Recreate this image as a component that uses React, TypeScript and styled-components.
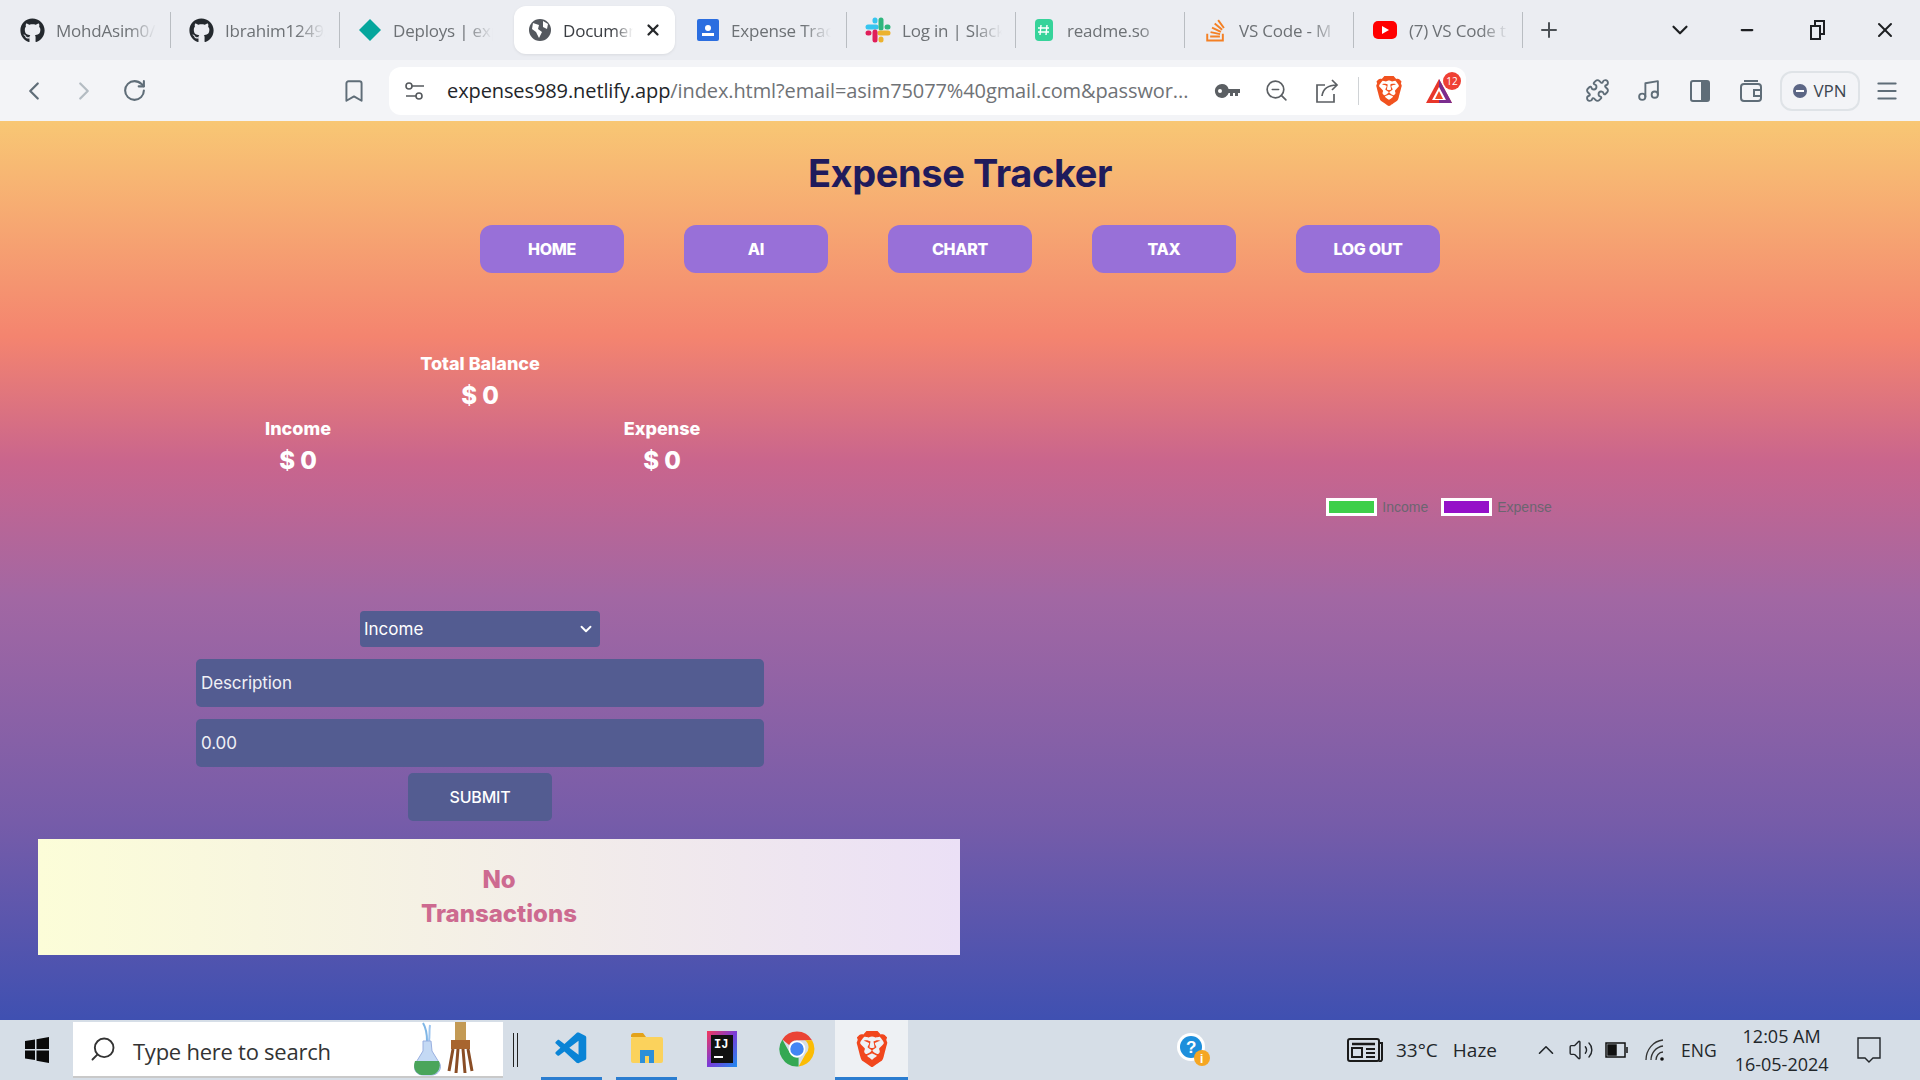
import React from "react";
import styled, { createGlobalStyle } from "styled-components";
import { FaGithub, FaStackOverflow } from "react-icons/fa";
import { SiBrave } from "react-icons/si";
import { VscVscode } from "react-icons/vsc";
import {
  ChevronDown,
  ChevronLeft,
  ChevronRight,
  ChevronUp,
  Bookmark,
  RotateCw,
  ZoomOut,
  Puzzle,
  Music,
  Menu,
  Plus,
  Minus,
  X,
  Search,
  Volume2,
} from "lucide-react";

const GlobalStyle = createGlobalStyle`
  html, body { margin: 0; padding: 0; height: 100%; overflow: hidden; }
  * { box-sizing: border-box; }
`;

const chromeFont = `"Open Sans", "Noto Sans", sans-serif`;
const pageFont = `Inter, "Open Sans", sans-serif`;

const Shell = styled.div`
  width: 1920px;
  height: 1080px;
  display: flex;
  flex-direction: column;
  font-family: ${chromeFont};
`;

const TabBar = styled.div`
  height: 60px;
  background: #ebedf2;
  display: flex;
  align-items: center;
  padding-left: 2px;
`;

const Tab = styled.div<{ $active?: boolean; $noSep?: boolean }>`
  width: ${(p) => (p.$active ? "161px" : "169px")};
  height: ${(p) => (p.$active ? "48px" : "36px")};
  margin: ${(p) => (p.$active ? "0 3px 0 5px" : "0")};
  padding-left: ${(p) => (p.$active ? "14px" : "18px")};
  display: flex;
  align-items: center;
  gap: 11px;
  flex: none;
  background: ${(p) => (p.$active ? "#fff" : "transparent")};
  border-radius: ${(p) => (p.$active ? "12px" : "0")};
  border-right: ${(p) => (p.$active || p.$noSep ? "none" : "1px solid #b9bdc2")};
  color: ${(p) => (p.$active ? "#3a3d42" : "#6d7175")};
  box-shadow: ${(p) => (p.$active ? "0 1px 3px rgba(0,0,0,.08)" : "none")};
`;

const TabTitle = styled.span<{ $active?: boolean }>`
  width: ${(p) => (p.$active ? "70px" : "100px")};
  margin-right: ${(p) => (p.$active ? "4px" : "0")};
  font-size: 17px;
  letter-spacing: -0.2px;
  white-space: nowrap;
  overflow: hidden;
  mask-image: linear-gradient(90deg, #000 72%, transparent 100%);
`;

const TabClose = styled.span`
  display: flex;
  margin-left: -4px;
  color: #26282b;
`;

const WindowControls = styled.div`
  margin-left: -5px;
  display: flex;
  align-items: center;
  color: #1d1f22;
`;

const PlusSlot = styled.div`
  width: 62px;
  margin-right: 70px;
  display: flex;
  justify-content: center;
  color: #4b5055;
`;

const WindowButton = styled.div<{ $w: number }>`
  width: ${(p) => p.$w}px;
  display: flex;
  justify-content: center;
`;

const Toolbar = styled.div`
  height: 61px;
  background: #f3f4f7;
  display: flex;
  align-items: center;
  padding-left: 9px;
  color: #5f6d78;
`;

const ToolSlot = styled.div<{ $w?: number; $dim?: boolean }>`
  width: ${(p) => p.$w ?? 50}px;
  display: flex;
  justify-content: center;
  flex: none;
  color: ${(p) => (p.$dim ? "#b4bcc3" : "inherit")};
`;

const BookmarkSlot = styled(ToolSlot)`
  margin-left: 180px;
  margin-right: 20px;
`;

const AddressBar = styled.div`
  width: 1077px;
  height: 48px;
  background: #fff;
  border-radius: 12px;
  display: flex;
  align-items: center;
  padding-left: 15px;
  flex: none;
`;

const UrlText = styled.div`
  width: 745px;
  margin-left: 21px;
  font-size: 20px;
  letter-spacing: -0.1px;
  white-space: nowrap;
  overflow: hidden;
  color: #6f7276;
  b {
    font-weight: 400;
    color: #23262a;
  }
`;

const AddressIcons = styled.div`
  display: flex;
  align-items: center;
  margin-left: 12px;
  color: #5b5f63;
`;

const AddressSep = styled.div`
  width: 1px;
  height: 28px;
  background: #d0d3d6;
  margin: 0 15px 0 6px;
`;

const RewardsWrap = styled.div`
  position: relative;
  margin-left: 21px;
  display: flex;
`;

const RewardsBadge = styled.span`
  position: absolute;
  top: -6px;
  right: -8px;
  width: 18px;
  height: 18px;
  border-radius: 50%;
  background: #ef4034;
  color: #fff;
  font-size: 10px;
  display: flex;
  align-items: center;
  justify-content: center;
`;

const ToolbarRight = styled.div`
  margin-left: 106px;
  display: flex;
  align-items: center;
`;

const VpnPill = styled.div`
  width: 80px;
  height: 40px;
  margin-left: 4px;
  border: 2px solid #dfe3e7;
  border-radius: 12px;
  display: flex;
  align-items: center;
  justify-content: center;
  gap: 6px;
  font-size: 17px;
  color: #3c4650;
`;

const VpnDot = styled.span`
  width: 14px;
  height: 14px;
  border-radius: 50%;
  background: #5c6685;
  display: flex;
  align-items: center;
  justify-content: center;
  &::after {
    content: "";
    width: 8px;
    height: 2px;
    background: #fff;
  }
`;

const Page = styled.main`
  height: 899px;
  background: linear-gradient(
    180deg,
    #f8c774 0%,
    #f4846f 24%,
    #c9658d 38%,
    #a267a3 53%,
    #765ca9 78%,
    #3f50b1 100%
  );
  overflow: hidden;
  font-family: ${pageFont};
`;

const Title = styled.h1`
  margin: 30px 0 0;
  height: 44px;
  line-height: 44px;
  text-align: center;
  font-size: 38px;
  font-weight: 700;
  letter-spacing: -0.4px;
  color: #1f1b5c;
`;

const Nav = styled.nav`
  margin-top: 30px;
  display: flex;
  justify-content: center;
  gap: 60px;
`;

const NavButton = styled.a`
  width: 144px;
  height: 48px;
  border-radius: 12px;
  background: #9870d8;
  color: #fff;
  font-size: 16px;
  font-weight: 800;
  letter-spacing: -0.3px;
  display: flex;
  align-items: center;
  justify-content: center;
`;

const Columns = styled.div`
  display: grid;
  grid-template-columns: 960px 960px;
`;

const LeftColumn = styled.section`
  display: flex;
  flex-direction: column;
  align-items: center;
`;

const Summary = styled.div`
  width: 546px;
  margin-top: 80px;
  display: grid;
  grid-template-columns: 1fr 1fr 1fr;
  grid-template-rows: 65px 59px;
  color: #fff;
  text-align: center;
`;

const Stat = styled.div<{ $col: number; $row: number }>`
  grid-column: ${(p) => p.$col};
  grid-row: ${(p) => p.$row};
  white-space: nowrap;
`;

const StatLabel = styled.div`
  font-size: 18px;
  font-weight: 800;
  line-height: 22px;
`;

const StatValue = styled.div`
  margin-top: 6px;
  font-size: 24px;
  font-weight: 800;
  line-height: 30px;
`;

const Form = styled.form`
  margin-top: 134px;
  width: 568px;
  display: flex;
  flex-direction: column;
  align-items: center;
`;

const SelectWrap = styled.div`
  position: relative;
  width: 240px;
  height: 36px;
  color: #fff;
  svg {
    position: absolute;
    right: 5px;
    top: 9px;
    pointer-events: none;
  }
`;

const TypeSelect = styled.select`
  width: 100%;
  height: 100%;
  padding: 0 4px;
  appearance: none;
  border: none;
  border-radius: 4px;
  background: #535c91;
  color: #fff;
  font-family: ${pageFont};
  font-size: 17px;
`;

const Field = styled.input`
  width: 100%;
  height: 48px;
  margin-top: 12px;
  padding: 0 5px;
  border: none;
  border-radius: 5px;
  background: #535c91;
  color: #fff;
  font-family: ${pageFont};
  font-size: 17px;
  letter-spacing: -0.1px;
  &::placeholder {
    color: #f0f0f5;
    opacity: 1;
  }
`;

const SubmitButton = styled.button`
  width: 144px;
  height: 48px;
  margin-top: 6px;
  border: none;
  border-radius: 5px;
  background: #535c91;
  color: #fff;
  font-family: ${pageFont};
  font-size: 16px;
  font-weight: 500;
  letter-spacing: -0.2px;
`;

const EmptyCard = styled.div`
  width: 922px;
  height: 116px;
  margin: 18px 0 0 38px;
  align-self: flex-start;
  background: linear-gradient(90deg, #fcfdd8, #ebe0f6);
  color: #cd6a90;
  font-size: 24px;
  font-weight: 800;
  line-height: 34px;
  text-align: center;
  display: flex;
  align-items: center;
  justify-content: center;
`;

const ChartColumn = styled.section`
  padding: 225px 2px 0 0;
  display: flex;
  justify-content: center;
  align-items: flex-start;
  gap: 13px;
  font-family: "Liberation Sans", Arial, sans-serif;
  font-size: 14px;
  color: #6b6570;
`;

const LegendItem = styled.div`
  display: flex;
  align-items: center;
  gap: 5px;
  height: 18px;
`;

const LegendSwatch = styled.span<{ $color: string }>`
  width: 51px;
  height: 18px;
  border: 3px solid #fff;
  background: ${(p) => p.$color};
`;

const Taskbar = styled.footer`
  height: 60px;
  background: #d6dee7;
  display: flex;
  align-items: stretch;
  color: #1a1a1a;
`;

const StartSlot = styled.div`
  width: 73px;
  display: flex;
  align-items: center;
  justify-content: center;
`;

const SearchBox = styled.div`
  width: 430px;
  margin: 2px 0;
  background: #fff;
  display: flex;
  align-items: center;
  padding-left: 16px;
  font-size: 22px;
  color: #333;
  border-bottom: 2px solid #c9c9c9;
`;

const SearchLabel = styled.span`
  margin-left: 16px;
  padding-top: 3px;
  width: 280px;
  letter-spacing: -0.25px;
`;

const DoubleBar = styled.div`
  width: 5px;
  height: 34px;
  margin: 13px 0 0 10px;
  border-left: 1px solid #222;
  border-right: 1px solid #222;
`;

const AppSlot = styled.div<{ $w: number; $gap?: number; $on?: boolean; $hi?: boolean }>`
  width: ${(p) => p.$w}px;
  margin-left: ${(p) => p.$gap ?? 0}px;
  display: flex;
  align-items: center;
  justify-content: center;
  background: ${(p) => (p.$hi ? "#eef1f4" : "transparent")};
  border-bottom: 3px solid ${(p) => (p.$on ? "#2b7dd0" : "transparent")};
`;

const TraySlot = styled.div<{ $left: number }>`
  margin-left: ${(p) => p.$left}px;
  display: flex;
  align-items: center;
  font-size: 19px;
  white-space: nowrap;
  color: #22262a;
`;

const EngSlot = styled(TraySlot)`
  font-size: 17.5px;
`;

const Clock = styled.div`
  margin-left: 13px;
  width: 104px;
  text-align: center;
  font-size: 18px;
  line-height: 28px;
  padding-top: 2px;
  color: #22262a;
`;

const Netlify = () => (
  <svg width="24" height="24" viewBox="0 0 24 24">
    <path d="M12 1 23 12 12 23 1 12Z" fill="#05a69c" />
  </svg>
);

const Globe = () => (
  <svg width="24" height="24" viewBox="0 0 24 24">
    <circle cx="12" cy="12" r="11" fill="#54585e" />
    <path d="M5 5l6 2-1 4 4 3-3 6-3-6-4-3zM15 3l5 3-1 5-4-2z" fill="#fff" />
  </svg>
);

const Contact = () => (
  <svg width="24" height="24" viewBox="0 0 24 24">
    <rect x="1" y="1" width="22" height="22" rx="2" fill="#2b6ee0" />
    <circle cx="12" cy="10" r="3" fill="#fff" />
    <rect x="6" y="15" width="12" height="3" fill="#fff" />
  </svg>
);

const Slack = () => (
  <svg width="26" height="26" viewBox="0 0 26 26" fill="none" strokeWidth="5" strokeLinecap="round">
    <path d="M3 10h8" stroke="#36c5f0" />
    <path d="M10 3v1" stroke="#36c5f0" />
    <path d="M16 3v8" stroke="#2eb67d" />
    <path d="M23 10h-1" stroke="#2eb67d" />
    <path d="M23 16h-8" stroke="#ecb22e" />
    <path d="M16 23v-1" stroke="#ecb22e" />
    <path d="M10 23v-8" stroke="#e01e5a" />
    <path d="M3 16h1" stroke="#e01e5a" />
  </svg>
);

const Readme = () => (
  <svg width="22" height="24" viewBox="0 0 22 24">
    <rect x="1" y="1" width="18" height="22" rx="4" fill="#36d39a" />
    <path d="M7 7 6 17M13 7l-1 10M4 10h11M4 14h11" stroke="#fff" strokeWidth="1.4" />
  </svg>
);

const Youtube = () => (
  <svg width="26" height="24" viewBox="0 0 26 24">
    <rect x="1" y="3" width="24" height="18" rx="5" fill="#f00" />
    <path d="M10 8l7 4-7 4z" fill="#fff" />
  </svg>
);

const Restore = () => (
  <svg width="16" height="20" viewBox="0 0 16 20" fill="none" stroke="#1d1f22" strokeWidth="2">
    <rect x="2" y="6" width="9" height="13" />
    <path d="M6 5V1h9v13h-3" />
  </svg>
);

const SiteSettings = () => (
  <svg width="22" height="22" viewBox="0 0 22 22" fill="none" stroke="#55595d" strokeWidth="1.6">
    <circle cx="5" cy="6" r="3" />
    <path d="M8 6h12M2 16h10" />
    <circle cx="15" cy="16" r="3" />
  </svg>
);

const KeyIcon = () => (
  <svg width="26" height="16" viewBox="0 0 26 16" fill="#5b5f63">
    <path d="M8 1a7 7 0 0 1 6.600 5H26v4h-2v3h-3v-3h-2v3h-3v-3h-1.400A7 7 0 1 1 8 1zM6 6a2 2 0 1 0 0 4 2 2 0 0 0 0-4z" />
  </svg>
);

const ShareIcon = () => (
  <svg width="26" height="26" viewBox="0 0 26 26" fill="none" stroke="#5b5f63" strokeWidth="1.7">
    <path d="M11 7H3v17h17v-8" />
    <path d="M8 18c1-7 6-11 15-11M18 2l5 5-5 5" />
  </svg>
);

const SidePanel = () => (
  <svg width="24" height="24" viewBox="0 0 24 24" fill="none" stroke="#5f6d78" strokeWidth="2">
    <rect x="3" y="2" width="18" height="20" rx="2" />
    <rect x="14" y="3" width="6" height="18" fill="#5f6d78" />
  </svg>
);

const Wallet = () => (
  <svg width="24" height="24" viewBox="0 0 24 24" fill="none" stroke="#5f6d78" strokeWidth="2">
    <rect x="2" y="5" width="20" height="17" rx="3" />
    <path d="M5 2h14M22 11h-7v6h7" />
  </svg>
);

const RewardsTriangle = () => (
  <svg width="28" height="26" viewBox="0 0 28 26">
    <path d="M14 1 27 25H1Z" fill="#e8362a" />
    <path d="M14 1 27 25H14Z" fill="#7b2d8e" />
    <path d="M14 9 21 22H7Z" fill="#fff" />
    <path d="M14 13l4 8h-8z" fill="#f04a23" />
  </svg>
);

const WindowsLogo = () => (
  <svg width="24" height="26" viewBox="0 0 24 26" fill="#0a0a0a">
    <path d="M0 4l10-1.600V12H0zM11.500 2.200 24 0v12H11.500zM0 13.500h10v9.600L0 21.500zM11.500 13.500H24V26l-12.500-2.200z" />
  </svg>
);

const FlaskDoodle = () => (
  <svg width="64" height="56" viewBox="0 0 64 56" fill="none">
    <path d="M10 2c3 5 4 10 4 18" stroke="#7fb6e6" strokeWidth="2" />
    <path d="M17 4c-1 6 0 10-1 16" stroke="#9ec6f0" strokeWidth="2" />
    <path d="M10 20h8l1 10 8 13c2 6-3 11-8 11h-9c-6 0-10-5-8-11l8-13z" fill="#c4d9f4" stroke="#9ab0e0" />
    <path d="M2 40h24c3 8-3 14-8 14h-8C4 54-1 48 2 40z" fill="#4aa55a" />
    <rect x="42" y="1" width="11" height="18" fill="#c39a55" />
    <rect x="38" y="19" width="19" height="9" fill="#a8652f" />
    <path d="M40 28l-4 22M45 28l-2 24M50 28l2 24M55 28l4 22" stroke="#8a4d25" strokeWidth="3" />
  </svg>
);

const Folder = () => (
  <svg width="34" height="38" viewBox="0 0 34 38">
    <path d="M1 6a3 3 0 0 1 3-3h9l3 4H1z" fill="#e3a21a" />
    <rect x="1" y="7" width="32" height="26" rx="2" fill="#fbd25c" />
    <path d="M10 33V20h14v13h-5v-7h-4v7z" fill="#2d8fd9" />
  </svg>
);

const IdeaLogo = () => (
  <svg width="30" height="36" viewBox="0 0 30 36">
    <defs>
      <linearGradient id="ij" x1="0" y1="0" x2="1" y2="1">
        <stop offset="0" stopColor="#f5385a" />
        <stop offset="0.5" stopColor="#7a3bd8" />
        <stop offset="1" stopColor="#1c8cf0" />
      </linearGradient>
    </defs>
    <rect width="30" height="36" fill="url(#ij)" />
    <rect x="4" y="4" width="22" height="28" fill="#111" />
    <text x="7" y="17" fontFamily="Liberation Mono, monospace" fontWeight="700" fontSize="12" fill="#fff">
      IJ
    </text>
    <rect x="7" y="25" width="9" height="2" fill="#fff" />
  </svg>
);

const Chrome = () => (
  <svg width="38" height="38" viewBox="0 0 48 48">
    <path d="M24 2a22 22 0 0 1 19 11H24a11 11 0 0 0-10 6L5.500 12A22 22 0 0 1 24 2z" fill="#ea4335" />
    <path d="M43 13a22 22 0 0 1-17 33l9-16a11 11 0 0 0-1-17z" fill="#fbbc05" />
    <path d="M26 46A22 22 0 0 1 5.500 12L15 29a11 11 0 0 0 11 6z" fill="#34a853" />
    <circle cx="24" cy="24" r="9.500" fill="#4285f4" stroke="#fff" strokeWidth="2" />
  </svg>
);

const HelpBadge = () => (
  <svg width="36" height="36" viewBox="0 0 36 36">
    <circle cx="15" cy="15" r="14" fill="#fff" />
    <circle cx="15" cy="15" r="11" fill="#1d8fdc" />
    <text x="10" y="21" fontFamily="Liberation Sans, sans-serif" fontWeight="700" fontSize="17" fill="#fff">
      ?
    </text>
    <circle cx="26" cy="26" r="8" fill="#f5a623" />
    <text x="24" y="31" fontFamily="Liberation Sans, sans-serif" fontWeight="700" fontSize="12" fill="#fff">
      i
    </text>
  </svg>
);

const NewsIcon = () => (
  <svg width="36" height="24" viewBox="0 0 36 24" fill="none" stroke="#1a1a1a" strokeWidth="2">
    <rect x="1" y="1" width="31" height="22" rx="2" />
    <path d="M32 5h3v16a2 2 0 0 1-3 2" />
    <path d="M5 6h23" strokeWidth="2.500" />
    <rect x="5" y="10" width="10" height="9" />
    <path d="M19 11h9M19 15h9M19 19h9" />
  </svg>
);

const Battery = () => (
  <svg width="24" height="16" viewBox="0 0 24 16" fill="none" stroke="#111" strokeWidth="1.500">
    <rect x="1" y="1" width="19" height="14" />
    <rect x="3" y="3" width="8" height="10" fill="#111" />
    <path d="M22 5v6" />
  </svg>
);

const WifiWedge = () => (
  <svg width="20" height="24" viewBox="0 0 20 24" fill="none" stroke="#333" strokeWidth="1.300">
    <path d="M1 22C1 12 8 3 18 2" />
    <path d="M6 22c0-7 5-13 12-14" />
    <path d="M11 22c0-4 3-8 7-8" />
    <circle cx="17" cy="21" r="1.800" fill="#111" stroke="none" />
  </svg>
);

const NotificationIcon = () => (
  <svg width="26" height="28" viewBox="0 0 26 28" fill="none" stroke="#22262a" strokeWidth="1.400">
    <path d="M2 2h22v20h-7l-4 4-4-4H2z" />
  </svg>
);

const tabs = [
  { title: "MohdAsim0/", icon: <FaGithub size={25} color="#24292e" /> },
  { title: "Ibrahim1249/", icon: <FaGithub size={25} color="#24292e" /> },
  { title: "Deploys | exp", icon: <Netlify />, noSep: true },
  { title: "Document", icon: <Globe />, active: true },
  { title: "Expense Trac", icon: <Contact /> },
  { title: "Log in | Slack", icon: <Slack /> },
  { title: "readme.so", icon: <Readme /> },
  { title: "VS Code - M", icon: <FaStackOverflow size={25} color="#f48024" /> },
  { title: "(7) VS Code t", icon: <Youtube /> },
];

const navItems = ["HOME", "AI", "CHART", "TAX", "LOG OUT"];

const stats = [
  { label: "Total Balance", col: 2, row: 1 },
  { label: "Income", col: 1, row: 2 },
  { label: "Expense", col: 3, row: 2 },
];

export default function App() {
  return (
    <Shell>
      <GlobalStyle />
      <TabBar>
        {tabs.map((tab) => (
          <Tab key={tab.title} $active={tab.active} $noSep={tab.noSep}>
            {tab.icon}
            <TabTitle $active={tab.active}>{tab.title}</TabTitle>
            {tab.active && (
              <TabClose>
                <X size={18} strokeWidth={3} />
              </TabClose>
            )}
          </Tab>
        ))}
        <WindowControls>
          <PlusSlot>
            <Plus size={24} strokeWidth={2} />
          </PlusSlot>
          <WindowButton $w={60}>
            <ChevronDown size={26} strokeWidth={2} />
          </WindowButton>
          <WindowButton $w={74}>
            <Minus size={18} strokeWidth={3} />
          </WindowButton>
          <WindowButton $w={66}>
            <Restore />
          </WindowButton>
          <WindowButton $w={70}>
            <X size={24} strokeWidth={2} />
          </WindowButton>
        </WindowControls>
      </TabBar>

      <Toolbar>
        <ToolSlot>
          <ChevronLeft size={30} strokeWidth={1.8} />
        </ToolSlot>
        <ToolSlot $dim>
          <ChevronRight size={30} strokeWidth={1.8} />
        </ToolSlot>
        <ToolSlot>
          <RotateCw size={25} strokeWidth={2} />
        </ToolSlot>
        <BookmarkSlot $w={30}>
          <Bookmark size={26} strokeWidth={1.8} />
        </BookmarkSlot>
        <AddressBar>
          <SiteSettings />
          <UrlText>
            <b>expenses989.netlify.app</b>/index.html?email=asim75077%40gmail.com&amp;passwor...
          </UrlText>
          <AddressIcons>
            <ToolSlot $w={46}>
              <KeyIcon />
            </ToolSlot>
            <ToolSlot $w={52}>
              <ZoomOut size={25} strokeWidth={1.6} />
            </ToolSlot>
            <ToolSlot $w={50}>
              <ShareIcon />
            </ToolSlot>
            <AddressSep />
            <SiBrave size={30} color="#f1521f" />
            <RewardsWrap>
              <RewardsTriangle />
              <RewardsBadge>12</RewardsBadge>
            </RewardsWrap>
          </AddressIcons>
        </AddressBar>
        <ToolbarRight>
          <ToolSlot $w={51}>
            <Puzzle size={25} strokeWidth={1.8} />
          </ToolSlot>
          <ToolSlot $w={51}>
            <Music size={25} strokeWidth={1.8} />
          </ToolSlot>
          <ToolSlot $w={51}>
            <SidePanel />
          </ToolSlot>
          <ToolSlot $w={51}>
            <Wallet />
          </ToolSlot>
          <VpnPill>
            <VpnDot />
            VPN
          </VpnPill>
          <ToolSlot $w={54}>
            <Menu size={26} strokeWidth={1.8} />
          </ToolSlot>
        </ToolbarRight>
      </Toolbar>

      <Page>
        <Title>Expense Tracker</Title>
        <Nav>
          {navItems.map((item) => (
            <NavButton key={item}>{item}</NavButton>
          ))}
        </Nav>
        <Columns>
          <LeftColumn>
            <Summary>
              {stats.map((s) => (
                <Stat key={s.label} $col={s.col} $row={s.row}>
                  <StatLabel>{s.label}</StatLabel>
                  <StatValue>$ 0</StatValue>
                </Stat>
              ))}
            </Summary>
            <Form>
              <SelectWrap>
                <TypeSelect defaultValue="Income">
                  <option>Income</option>
                  <option>Expense</option>
                </TypeSelect>
                <ChevronDown size={18} strokeWidth={2.5} />
              </SelectWrap>
              <Field placeholder="Description" />
              <Field placeholder="0.00" />
              <SubmitButton type="button">SUBMIT</SubmitButton>
            </Form>
            <EmptyCard>
              No
              <br />
              Transactions
            </EmptyCard>
          </LeftColumn>
          <ChartColumn>
            <LegendItem>
              <LegendSwatch $color="#3ecf4a" />
              Income
            </LegendItem>
            <LegendItem>
              <LegendSwatch $color="#9510c8" />
              Expense
            </LegendItem>
          </ChartColumn>
        </Columns>
      </Page>

      <Taskbar>
        <StartSlot>
          <WindowsLogo />
        </StartSlot>
        <SearchBox>
          <Search size={28} strokeWidth={1.6} style={{ transform: "scaleX(-1)" }} />
          <SearchLabel>Type here to search</SearchLabel>
          <FlaskDoodle />
        </SearchBox>
        <DoubleBar />
        <AppSlot $w={61} $gap={23} $on>
          <VscVscode size={38} color="#0a84d6" />
        </AppSlot>
        <AppSlot $w={61} $gap={14} $on>
          <Folder />
        </AppSlot>
        <AppSlot $w={61} $gap={14}>
          <IdeaLogo />
        </AppSlot>
        <AppSlot $w={61} $gap={14}>
          <Chrome />
        </AppSlot>
        <AppSlot $w={73} $gap={8} $on $hi>
          <SiBrave size={36} color="#f1471d" />
        </AppSlot>
        <TraySlot $left={268}>
          <HelpBadge />
        </TraySlot>
        <TraySlot $left={135}>
          <NewsIcon />
        </TraySlot>
        <TraySlot $left={13}>33°C</TraySlot>
        <TraySlot $left={15}>Haze</TraySlot>
        <TraySlot $left={36}>
          <ChevronUp size={26} strokeWidth={1.5} />
        </TraySlot>
        <TraySlot $left={9}>
          <Volume2 size={26} strokeWidth={1.3} />
        </TraySlot>
        <TraySlot $left={11}>
          <Battery />
        </TraySlot>
        <TraySlot $left={16}>
          <WifiWedge />
        </TraySlot>
        <EngSlot $left={16}>ENG</EngSlot>
        <Clock>
          12:05 AM
          <br />
          16-05-2024
        </Clock>
        <TraySlot $left={22}>
          <NotificationIcon />
        </TraySlot>
      </Taskbar>
    </Shell>
  );
}
